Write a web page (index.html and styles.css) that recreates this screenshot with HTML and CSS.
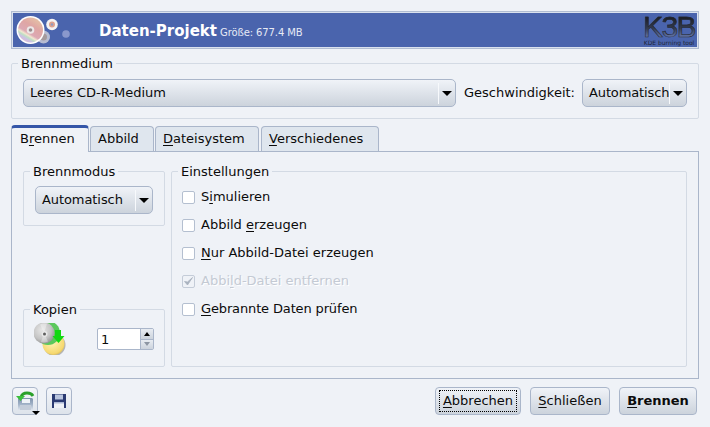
FILE: index.html
```html
<!DOCTYPE html>
<html lang="de">
<head>
<meta charset="utf-8">
<title>Daten-Projekt</title>
<link rel="stylesheet" href="styles.css">
</head>
<body>
<div class="dialog">
  <header class="banner">
    <svg class="banner-icon" width="74" height="34" viewBox="0 0 74 34">
      <defs>
        <linearGradient id="rainbow" x1=".8" y1="0" x2=".2" y2="1">
          <stop offset="0" stop-color="#e6c6a6"/><stop offset=".35" stop-color="#dfa6a4"/><stop offset=".62" stop-color="#dca9b4"/><stop offset=".7" stop-color="#f2e6d0"/><stop offset=".76" stop-color="#bfe0c4"/><stop offset=".84" stop-color="#cdbfe6"/><stop offset="1" stop-color="#e2c0c8"/>
        </linearGradient>
      </defs>
      <circle cx="30.500" cy="24" r="6.500" fill="#c9cbd8" opacity=".85"/>
      <circle cx="30.500" cy="24" r="3.500" fill="#a59a9c"/>
      <circle cx="17.500" cy="17" r="14" fill="#fff"/>
      <circle cx="17.500" cy="17" r="12.500" fill="url(#rainbow)"/>
      <circle cx="17.500" cy="17" r="3.800" fill="#ece8e8"/>
      <circle cx="17.500" cy="17" r="1.800" fill="#9a8c8c"/>
      <circle cx="39" cy="11.500" r="5.800" fill="#f4f2f2"/>
      <circle cx="39" cy="11.500" r="3" fill="#dda08e"/>
      <circle cx="39" cy="11.500" r="1.200" fill="#8f9ac0"/>
      <circle cx="53" cy="21" r="3.800" fill="#8a98cc"/>
    </svg>
    <span class="banner-title">Daten-Projekt</span>
    <span class="banner-sub">Größe: 677.4 MB</span>
    <div class="logo">
      <span class="logo-mark">K3B</span>
      <span class="logo-tag">KDE burning tool</span>
    </div>
  </header>

  <fieldset class="group medium">
    <legend>Brennmedium</legend>
    <div class="medium-row">
      <div class="combo combo-wide"><span class="combo-text">Leeres CD-R-Medium</span><span class="combo-sep"></span><span class="arrow"></span></div>
      <span class="speed-label">Geschwindigkeit:</span>
      <div class="combo combo-speed"><span class="combo-text">Automatisch</span><span class="combo-sep"></span><span class="arrow"></span></div>
    </div>
  </fieldset>

  <nav class="tabs">
    <div class="tab active">B<u>r</u>ennen</div>
    <div class="tab t-abbild">Abbild</div>
    <div class="tab t-datei"><u>D</u>ateisystem</div>
    <div class="tab t-versch"><u>V</u>erschiedenes</div>
  </nav>

  <section class="panel">
    <div class="left-col">
      <fieldset class="group">
        <legend>Brennmodus</legend>
        <div class="mode-body">
          <div class="combo combo-mode"><span class="combo-text">Automatisch</span><span class="combo-sep"></span><span class="arrow"></span></div>
        </div>
      </fieldset>
      <fieldset class="group">
        <legend>Kopien</legend>
        <div class="copies-body">
          <svg class="copies-icon" width="32" height="32" viewBox="0 0 32 32">
            <defs>
              <radialGradient id="grey" cx=".4" cy=".35" r=".8"><stop offset="0" stop-color="#e6e6e6"/><stop offset=".55" stop-color="#c4c4c4"/><stop offset="1" stop-color="#808080"/></radialGradient>
              <radialGradient id="yellow" cx=".45" cy=".4" r=".75"><stop offset="0" stop-color="#fff4b8"/><stop offset=".7" stop-color="#f6d970"/><stop offset="1" stop-color="#bf9a3a"/></radialGradient>
            </defs>
            <circle cx="20.500" cy="22" r="11" fill="#777" opacity=".5"/>
            <circle cx="19.500" cy="21" r="11" fill="url(#yellow)"/>
            <circle cx="14" cy="10" r="12" fill="#5cc85c"/>
            <circle cx="10" cy="10" r="10.500" fill="url(#grey)"/>
            <path d="M10 10L6 1.500a10 10 0 0 1 7 -.8zM10 10l4 8.500a10 10 0 0 1 -7 .6z" fill="#fff" opacity=".35"/>
            <circle cx="10.500" cy="11" r="3" fill="#e8e8e8"/>
            <circle cx="10.500" cy="11" r="1.500" fill="#5f5f5f"/>
            <path d="M21 7h6v6h3.500l-6 7-6-7H21z" fill="#12d812"/>
          </svg>
          <div class="spin">
            <span class="spin-value">1</span>
            <div class="spin-buttons">
              <span class="spin-btn"><i class="tri-up"></i></span>
              <span class="spin-btn"><i class="tri-down"></i></span>
            </div>
          </div>
        </div>
      </fieldset>
    </div>
    <fieldset class="group settings">
      <legend>Einstellungen</legend>
      <div class="checks">
        <label class="check"><span class="box"></span><span class="lbl">S<u>i</u>mulieren</span></label>
        <label class="check"><span class="box"></span><span class="lbl">Abbild <u>e</u>rzeugen</span></label>
        <label class="check"><span class="box"></span><span class="lbl"><u>N</u>ur Abbild-Datei erzeugen</span></label>
        <label class="check disabled"><span class="box">
          <svg width="13" height="13" viewBox="0 0 13 13"><path d="M2.500 6.500l3 3.500 5-7.500-5 4.500z" fill="#a9b2bf" stroke="#a9b2bf" stroke-width=".8"/></svg>
        </span><span class="lbl">Abbi<u>l</u>d-Datei entfernen</span></label>
        <label class="check"><span class="box"></span><span class="lbl tight"><u>G</u>ebrannte Daten prüfen</span></label>
      </div>
    </fieldset>
  </section>

  <footer class="footer">
    <button class="btn tool tool-load" type="button">
      <svg width="22" height="22" viewBox="0 0 22 22">
        <defs>
          <linearGradient id="floppy" x1="0" y1="0" x2="0" y2="1"><stop offset="0" stop-color="#7f93ad"/><stop offset=".5" stop-color="#9fb0c6"/><stop offset="1" stop-color="#dfe5ee"/></linearGradient>
        </defs>
        <path d="M4 8h14l1 1v11H4z" fill="url(#floppy)"/>
        <path d="M8 9h8v4H8z" fill="#eef2f7"/>
        <path d="M6 15h11v5H6z" fill="#c3ccd9"/>
        <path d="M7 7c1-3 3-4 6-4 3 0 5 1 6 3" fill="none" stroke="#2aa02a" stroke-width="2.800"/>
        <path d="M2 6h9l-4.500 5z" fill="#3cc03c"/>
      </svg>
      <i class="tool-arrow"></i>
    </button>
    <button class="btn tool tool-save" type="button">
      <svg width="16" height="16" viewBox="0 0 16 16">
        <path d="M1 1h14v14H1z" fill="#2a3a72"/>
        <path d="M4 1.500h8v5H4z" fill="#b9c5de"/>
        <path d="M3 9h10v6H3z" fill="#eef1f7"/>
        <path d="M3 9h10v1.500H3z" fill="#aab6d4"/>
      </svg>
    </button>
    <span class="spacer"></span>
    <button class="btn b-cancel" type="button"><span class="focus"><u>A</u>bbrechen</span></button>
    <button class="btn b-close" type="button"><span class="btn-text"><u>S</u>chließen</span></button>
    <button class="btn b-burn" type="button"><span class="btn-text"><u>B</u>rennen</span></button>
  </footer>
</div>
</body>
</html>
```
FILE: styles.css
```css
* { box-sizing: border-box; }
html, body { margin: 0; padding: 0; }
body {
  width: 710px;
  height: 427px;
  overflow: hidden;
  background: #eff2f7;
  color: #0b0b0b;
  font: 13px/15px "DejaVu Sans", sans-serif;
}
u { text-underline-offset: 2px; text-decoration-thickness: 1px; }

.dialog {
  display: flex;
  flex-direction: column;
  padding: 11px 11px 0;
}

/* banner */
.banner {
  display: flex;
  align-items: center;
  height: 38px;
  background: #4a64ad;
  border: 1px solid #b1bdd2;
  box-shadow: inset 0 0 0 1px #dbe2ee;
  color: #fff;
  padding: 0 2px 0 1px;
}
.banner-icon { flex: none; }
.banner-title {
  margin-left: 12px;
  padding-top: 2px;
  font-weight: bold;
  font-size: 15px;
}
.banner-sub {
  margin-left: 3px;
  padding-top: 4px;
  font-size: 10px;
  letter-spacing: -.1px;
  color: #e6eaf5;
}
.logo {
  margin-left: auto;
  width: 54px;
  height: 33px;
  display: flex;
  flex-direction: column;
  align-items: center;
}
.logo-mark {
  font: 30px/26px "Liberation Sans", sans-serif;
  letter-spacing: -1.5px;
  height: 26px;
  -webkit-text-stroke: .5px #22262e;
  background: linear-gradient(#1d2027 15%, #333b50 55%, #6678ad 90%);
  -webkit-background-clip: text;
  background-clip: text;
  color: transparent;
}
.logo-tag {
  font: 6px/6px "DejaVu Sans", sans-serif;
  color: #1d2438;
  white-space: nowrap;
}

/* group boxes */
.group {
  margin: 0;
  padding: 0;
  min-width: 0;
  border: 1px solid #d3dae4;
  border-radius: 2px;
}
.group legend {
  margin-left: 6px;
  padding: 0 3px;
  line-height: 15px;
}
.medium { margin-top: 7px; }
.medium-row {
  display: flex;
  align-items: center;
  padding: 8px 11px 11px;
}
.speed-label { margin: 0 7px 2px 8px; white-space: nowrap; }

/* combo */
.combo {
  display: flex;
  align-items: center;
  height: 28px;
  border: 1px solid #aab6ca;
  border-radius: 5px;
  background: linear-gradient(#f0f3f8, #ccd3dc);
  padding-left: 6px;
}
.combo-wide { flex: 1; }
.combo-speed { flex: none; width: 105px; letter-spacing: -.12px; }
.combo-mode { width: 118px; letter-spacing: -.08px; }
.combo-text { flex: 1; width: 0; margin-bottom: 2px; white-space: nowrap; }
.combo-sep {
  width: 1px;
  height: 21px;
  background: #f7f9fc;
  flex: none;
}
.arrow {
  flex: none;
  width: 10px;
  height: 5px;
  margin: 1px 3px 0 3px;
  background: #000;
  clip-path: polygon(0 0, 100% 0, 50% 100%);
}

/* tabs */
.tabs {
  display: flex;
  align-items: flex-end;
  height: 26px;
  margin-top: 6px;
  position: relative;
  z-index: 1;
}
.tab {
  height: 25px;
  margin-left: 2px;
  padding: 4px 0 0 7px;
  background: #dfe6ee;
  border: 1px solid #aab6ca;
  border-bottom: 0;
  border-radius: 4px 4px 0 0;
}
.tab.active {
  width: 78px;
  height: 27px;
  margin: 0 0 -1px;
  padding: 3px 0 0 8px;
  background: #eff2f7;
  border-top: 3px solid #3556a8;
}
.t-abbild { width: 64px; margin-left: 1px; }
.t-datei { width: 104px; margin-left: 1px; }
.t-versch { width: 118px; }

.panel {
  display: flex;
  gap: 6px;
  height: 228px;
  border: 1px solid #aab6ca;
  padding: 12px 11px 11px;
}
.left-col {
  flex: none;
  width: 142px;
  display: flex;
  flex-direction: column;
  justify-content: space-between;
}
.mode-body { padding: 7px 11px 11px; }
.copies-body {
  display: flex;
  align-items: center;
  padding: 6px 10px 11px;
}
.copies-icon { flex: none; }
.spin {
  display: flex;
  width: 57px;
  height: 22px;
  margin-left: 31px;
  border: 1px solid #aab6ca;
  border-radius: 2px;
  background: #fff;
}
.spin-value { flex: 1; padding: 3px 0 0 3px; }
.spin-buttons {
  flex: none;
  width: 13px;
  display: flex;
  flex-direction: column;
  border-left: 1px solid #aab6ca;
}
.spin-btn {
  flex: 1;
  display: flex;
  align-items: center;
  justify-content: center;
  background: linear-gradient(#e8ecf2, #ccd3dc);
}
.spin-btn + .spin-btn { border-top: 1px solid #aab6ca; }
.tri-up, .tri-down { width: 0; height: 0; border: 3px solid transparent; box-sizing: content-box; }
.tri-up { border-top: 0; border-bottom: 4px solid #000; }
.tri-down { border-bottom: 0; border-top: 4px solid #8d96a3; }

.settings { flex: 1; }
.checks { padding: 4px 10px 0; }
.check {
  display: flex;
  align-items: center;
  height: 28px;
  gap: 6px;
}
.lbl { margin-bottom: 2px; }
.tight { letter-spacing: -.14px; }
.box {
  flex: none;
  width: 13px;
  height: 13px;
  background: #fff;
  border: 1px solid #b4bfd0;
  border-radius: 2px;
  display: flex;
  align-items: center;
  justify-content: center;
}
.box svg { flex: none; }
.disabled { color: #c4cad4; text-shadow: 1px 1px 0 #fff; }
.disabled .box { background: #eff2f7; border-color: #c4ccd8; }

/* footer */
.footer {
  display: flex;
  align-items: center;
  margin-top: 8px;
  padding: 0 2px 0 1px;
}
.btn {
  height: 28px;
  border: 1px solid #aab6ca;
  border-radius: 4px;
  background: linear-gradient(#f0f3f8, #ccd3dc);
  font: 13px/15px "DejaVu Sans", sans-serif;
  color: #0b0b0b;
  padding: 0;
  display: flex;
  align-items: center;
  justify-content: center;
}
.btn-text { margin-bottom: 2px; }
.tool {
  width: 26px;
  position: relative;
  background: linear-gradient(#f4f6fa, #dde3eb);
}
.tool-save { margin-left: 8px; }
.tool-arrow {
  position: absolute;
  right: -3px;
  bottom: -1px;
  width: 0;
  height: 0;
  border: 4px solid transparent;
  border-bottom: 0;
  border-top: 4px solid #000;
}
.spacer { flex: 1; }
.b-cancel { width: 86px; }
.focus {
  display: block;
  width: 78px;
  padding: 2px 0 3px;
  border: 1px dotted #000;
  line-height: 15px;
}
.b-close { width: 80px; margin-left: 9px; }
.b-burn { width: 78px; margin-left: 9px; font-weight: bold; }
```
